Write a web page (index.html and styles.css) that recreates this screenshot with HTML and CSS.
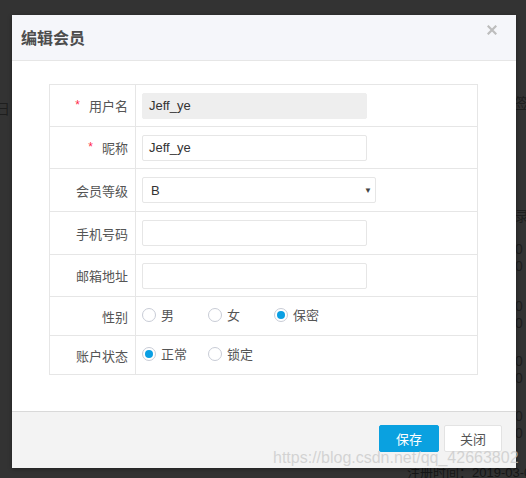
FILE: index.html
```html
<!DOCTYPE html>
<html lang="zh">
<head>
<meta charset="utf-8">
<title>编辑会员</title>
<link rel="stylesheet" href="styles.css">
</head>
<body>
<div class="page">
  <div class="bg-text bg-l1">日</div>
  <div class="bg-text bg-r1">签</div>
  <div class="bg-text bg-r2">录</div>
  <div class="bg-text bg-r3">0<br>0</div>
  <div class="bg-text bg-r4">0<br>0</div>
  <div class="bg-text bg-r5">0<br>0</div>
  <div class="bg-text bg-r6">0<br>0</div>
  <div class="bg-text bg-bottom">注册时间：2019-03-0</div>

  <div class="dialog">
    <div class="dlg-head">
      <span class="dlg-title">编辑会员</span>
      <span class="dlg-close"><svg width="10" height="10" viewBox="0 0 10 10"><path d="M1.5 1.5L8.5 8.5M8.5 1.5L1.5 8.5" stroke="#bdbdbd" stroke-width="2.2" stroke-linecap="square"/></svg></span>
    </div>
    <div class="dlg-body">
      <div class="form">
        <div class="row h42">
          <div class="label"><span class="req">*</span>用户名</div>
          <div class="field"><div class="input disabled">Jeff_ye</div></div>
        </div>
        <div class="row h42">
          <div class="label"><span class="req">*</span>昵称</div>
          <div class="field"><div class="input">Jeff_ye</div></div>
        </div>
        <div class="row h43">
          <div class="label">会员等级</div>
          <div class="field"><div class="input select">B<span class="arrow">▼</span></div></div>
        </div>
        <div class="row h43">
          <div class="label">手机号码</div>
          <div class="field"><div class="input"></div></div>
        </div>
        <div class="row h42">
          <div class="label">邮箱地址</div>
          <div class="field"><div class="input"></div></div>
        </div>
        <div class="row h39">
          <div class="label">性别</div>
          <div class="field">
            <span class="radio"><span class="circle"></span>男</span>
            <span class="radio"><span class="circle"></span>女</span>
            <span class="radio"><span class="circle on"></span>保密</span>
          </div>
        </div>
        <div class="row h39 last">
          <div class="label">账户状态</div>
          <div class="field">
            <span class="radio"><span class="circle on"></span>正常</span>
            <span class="radio"><span class="circle"></span>锁定</span>
          </div>
        </div>
      </div>
    </div>
    <div class="dlg-foot">
      <span class="btn primary">保存</span>
      <span class="btn">关闭</span>
    </div>
  </div>
  <div class="watermark">https://blog.csdn.net/qq_42663802</div>
</div>
</body>
</html>
```
FILE: styles.css
```css
* { box-sizing: border-box; }
html, body { margin: 0; padding: 0; }
body {
  background: #333333;
  font-family: "Liberation Sans", "Noto Sans CJK SC", sans-serif;
  font-size: 13px;
  color: #333;
}
.page {
  position: relative;
  width: 526px;
  height: 478px;
  overflow: hidden;
  padding: 15px 10px 0 12px;
}
.bg-text {
  position: absolute;
  color: #1e1e1e;
  font-size: 14px;
  line-height: 17px;
  white-space: nowrap;
}
.bg-l1 { left: -4px; top: 101px; }
.bg-r1 { left: 515px; top: 95px; }
.bg-r2 { left: 515px; top: 208px; }
.bg-r3 { left: 515px; top: 241px; }
.bg-r4 { left: 515px; top: 298px; }
.bg-r5 { left: 515px; top: 353px; }
.bg-r6 { left: 515px; top: 408px; }
.bg-bottom { left: 407px; top: 464px; font-size: 13px; color: #161616; }

.dialog {
  position: relative;
  width: 504px;
  height: 453px;
  background: #fff;
  display: flex;
  flex-direction: column;
  box-shadow: 0 1px 4px rgba(0,0,0,0.4);
}
.dlg-head {
  height: 46px;
  background: #f5f6fa;
  border-bottom: 1px solid #e6e6e6;
  display: flex;
  align-items: center;
  justify-content: space-between;
  padding: 0 19px 0 9px;
}
.dlg-title {
  font-family: "Noto Sans CJK SC", sans-serif;
  font-size: 16px;
  font-weight: bold;
  color: #4d4d4d;
  margin-top: -2px;
}
.dlg-close { display: flex; margin-top: -15px; }
.dlg-body {
  flex: 1;
  padding: 23px 39px 0 37px;
}
.form {
  width: 429px;
  border: 1px solid #e6e6e6;
}
.row {
  display: flex;
  border-bottom: 1px solid #e6e6e6;
}
.row.last { border-bottom: none; }
.h42 { height: 42px; }
.h43 { height: 43px; }
.h39 { height: 39px; }
.row.last.h39 { height: 38px; }
.label {
  width: 86px;
  border-right: 1px solid #e6e6e6;
  display: flex;
  align-items: center;
  justify-content: flex-end;
  padding-right: 7px;
  font-family: "Noto Sans CJK SC", sans-serif;
  font-size: 13px;
  color: #555;
}
.req {
  color: #ff2a4a;
  font-family: "Liberation Sans", sans-serif;
  font-size: 12px;
  margin-right: 9px;
  margin-top: -2px;
}
.field {
  flex: 1;
  display: flex;
  align-items: center;
  padding-left: 6px;
}
.input {
  width: 225px;
  height: 26px;
  border: 1px solid #e6e6e6;
  border-radius: 2px;
  padding-left: 6px;
  display: flex;
  align-items: center;
  font-family: "Liberation Sans", sans-serif;
  font-size: 13px;
  color: #333;
}
.input.disabled {
  background: #eeeeee;
  border-color: #eeeeee;
}
.input.select {
  width: 234px;
  justify-content: space-between;
  padding-left: 8px;
  padding-right: 3px;
}
.arrow {
  font-size: 8px;
  color: #444;
}
.radio {
  width: 66px;
  display: flex;
  align-items: center;
  font-family: "Noto Sans CJK SC", sans-serif;
  font-size: 13px;
  color: #555;
  margin-top: -3px;
}
.circle {
  width: 14px;
  height: 14px;
  border: 1px solid #c8ccd6;
  border-radius: 50%;
  margin-right: 5px;
  background: #fff;
  display: flex;
  align-items: center;
  justify-content: center;
}
.circle.on::after {
  content: "";
  width: 8px;
  height: 8px;
  border-radius: 50%;
  background: #0a9fe3;
}
.dlg-foot {
  height: 57px;
  background: #f3f3f3;
  border-top: 1px solid #d9d9d9;
  display: flex;
  justify-content: flex-end;
  align-items: flex-start;
  padding: 13px 14px 0 0;
  gap: 5px;
}
.btn {
  height: 27px;
  width: 58px;
  background: #fff;
  border: 1px solid #e3e3e3;
  border-radius: 2px;
  display: flex;
  align-items: center;
  justify-content: center;
  font-family: "Noto Sans CJK SC", sans-serif;
  font-size: 13px;
  color: #555;
}
.btn.primary {
  width: 60px;
  background: #0aa1e0;
  border-color: #0aa1e0;
  color: #fff;
}
.watermark {
  position: absolute;
  left: 273px;
  top: 449px;
  font-family: "Liberation Sans", sans-serif;
  font-size: 16px;
  color: rgba(200,200,200,0.75);
  white-space: nowrap;
}
```
